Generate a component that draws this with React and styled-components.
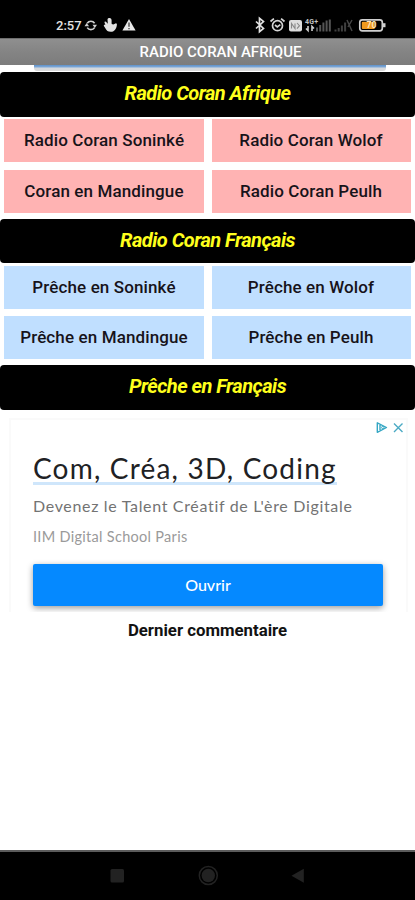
import React from 'react'
import styled, { createGlobalStyle } from 'styled-components'

const GlobalStyle = createGlobalStyle`
  * {
    box-sizing: border-box;
  }
  body {
    margin: 0;
    background-color: white;
    font-family: Roboto, "Liberation Sans", sans-serif;
  }
`

const Screen = styled.div`
    display: flex;
    flex-direction: column;
    width: 415px;
    height: 900px;
    overflow: hidden;
    background-color: white;
`

const StatusBar = styled.div`
    display: flex;
    justify-content: space-between;
    flex-shrink: 0;
    height: 38px;
    padding: 14px 29px 0 56px;
    background-color: black;
`

const StatusGroup = styled.div`
    display: flex;
    align-items: center;
    height: 22px;
`

const Clock = styled.span`
    width: 28px;
    font-size: 13px;
    font-weight: 500;
    color: #e4e4e4;
`

const TitleBar = styled.h1`
    flex-shrink: 0;
    height: 27px;
    margin: 0;
    padding-left: 26px;
    background: linear-gradient(#8f8f8f, #858585 45%, #7c7c7c);
    border-top: 1px solid #6e6e6e;
    color: white;
    font-size: 15px;
    font-weight: 500;
    line-height: 26px;
    text-align: center;
    white-space: nowrap;
`

const AdEdge = styled.div`
    flex-shrink: 0;
    height: 7px;
    padding: 0 29px 0 34px;
`

const AdEdgeLine = styled.div`
    height: 6px;
    background: linear-gradient(#5f91c8 0, #7fa9d8 2px, #d3d7dc 3px, #d9d9d9 6px);
    border-radius: 0 0 3px 3px;
`

const Heading = styled.h2`
    flex-shrink: 0;
    height: 44.5px;
    margin: 0;
    background-color: black;
    border-radius: 4px;
    color: #ffff1c;
    font-size: 20px;
    font-style: italic;
    font-weight: 700;
    letter-spacing: -0.52px;
    line-height: 43px;
    text-align: center;
    white-space: nowrap;
`

const Grid = styled.div`
    display: grid;
    flex-shrink: 0;
    grid-template-columns: 200px 199px;
    grid-auto-rows: 43px;
    gap: 7.5px;
    height: 102px;
    padding: 2.5px 4px 0;
`

const Station = styled.div`
    background-color: ${({ $color }) => $color};
    color: #17131a;
    font-size: 17px;
    font-weight: 500;
    letter-spacing: 0.12px;
    line-height: 43px;
    text-align: center;
    white-space: nowrap;
`

const Ad = styled.section`
    flex-shrink: 0;
    width: 399px;
    height: 194px;
    margin: 8px 0 0 9px;
    padding: 1px 1px 0 24px;
    overflow: hidden;
    border: 2px solid #fafafa;
    border-bottom: none;
    font-family: Lato, "Liberation Sans", sans-serif;
`

const AdChoices = styled.div`
    display: flex;
    justify-content: flex-end;
    align-items: center;
    height: 14px;
`

const AdTitle = styled.div`
    width: 304px;
    height: 50px;
    margin-left: -2px;
    padding-top: 17px;
    border-bottom: 3px solid #cfe6fb;
    color: #202124;
    font-size: 28px;
    letter-spacing: 1.2px;
    line-height: 33px;
    white-space: nowrap;
`

const AdText = styled.div`
    margin-left: -2px;
    padding-top: 10px;
    color: #737373;
    font-size: 16px;
    letter-spacing: 0.67px;
    line-height: 22px;
    white-space: nowrap;
`

const Advertiser = styled.div`
    margin-left: -2px;
    padding-top: 9px;
    color: #9a9a9a;
    font-size: 14.5px;
    letter-spacing: 0.3px;
    line-height: 22px;
    white-space: nowrap;
`

const OpenButton = styled.button`
    display: block;
    width: 350px;
    height: 42px;
    margin: 16px 0 0 -2px;
    padding: 0;
    border: none;
    border-radius: 2px;
    background-color: #0589ff;
    box-shadow: 0 2px 6px rgba(0, 0, 0, 0.4);
    color: white;
    font-family: inherit;
    font-size: 16px;
    font-weight: 500;
    text-align: center;
`

const LastComment = styled.h3`
    flex: 1;
    margin: 0;
    padding-top: 7.5px;
    color: #121212;
    font-size: 16.8px;
    font-weight: 700;
    line-height: 22px;
    text-align: center;
`

const NavBar = styled.nav`
    flex-shrink: 0;
    height: 50px;
    border-top: 2px solid #5c5c5c;
    background-color: black;
    text-align: center;
`

const sections = [
    {
        title: 'Radio Coran Afrique',
        color: '#ffb3b3',
        stations: ['Radio Coran Soninké', 'Radio Coran Wolof', 'Coran en Mandingue', 'Radio Coran Peulh'],
    },
    {
        title: 'Radio Coran Français',
        color: '#c0dfff',
        stations: ['Prêche en Soninké', 'Prêche en Wolof', 'Prêche en Mandingue', 'Prêche en Peulh'],
    },
]

const LeftIcons = () => (
    <svg width="54" height="22" viewBox="84 14 54 22" fill="none">
        <path d="M87.2 23.2a4.4 4.4 0 0 1 7.4 0M94.6 27.6a4.4 4.4 0 0 1-7.4 0" stroke="#d0d0d0" strokeWidth="1.6" />
        <path d="M84.5 26.3l2.2-3.4 2.4 3.4zM92.5 24.7l2.3 3.2 2.2-3.2z" fill="#d0d0d0" />
        <path d="M107.5 19.3c.3-1.2 2.6-1.8 3.6-.6.9 1.1.3 3.2.6 5.2l1.6.7 2.2-1.2c1.2-.4 1.7.8 1.3 2-.5 3.6-2.6 6.4-6.1 6.4-2.6 0-4.4-1.3-5.2-3.3l-1.6-2.6c-.4-1 .7-1.6 1.5-1l-.9-2.4c-.1-1 1.2-1.3 1.7-.4l1.6 1.7z" fill="#e3e3e3" />
        <path d="M129 19l6.6 11.5h-13.2z" fill="#e8e8e8" />
        <path d="M129 22.5v4.2M129 28v1.3" stroke="#333" strokeWidth="1.2" />
    </svg>
)

const RightIcons = () => (
    <svg width="134" height="22" viewBox="252 14 134 22" fill="none">
        <path d="M256 21.5l7.5 7-4 3.3V18.2l4 3.3-7.5 7" stroke="#e2e2e2" strokeWidth="1.7" />
        <circle cx="277.5" cy="25.7" r="5" stroke="#d5d5d5" strokeWidth="1.7" />
        <path d="M270.5 21.5l3.4-2.9M284.5 21.5l-3.4-2.9M275 25l2.3 2 3-2.3" stroke="#d5d5d5" strokeWidth="1.7" />
        <rect x="289" y="20" width="13" height="11.5" rx="2" fill="#dedede" />
        <path d="M291.5 28.5v-5l3.5 5v-5M297 23l2.5 2.7-2.5 3" stroke="#888" strokeWidth="1.1" />
        <text x="305" y="24.4" fill="#c2c2c2" fontFamily="Roboto, sans-serif" fontSize="7" fontWeight="700" textLength="13">4G+</text>
        <path d="M308 26v4.5l-2-2M312 31v-4.5l2 2" stroke="#d0d0d0" strokeWidth="1.6" />
        <path d="M317 31.5v-4M320.2 31.5V25M323.4 31.5v-9M326.6 31.5v-11M329.8 31.5V19.5" stroke="#555" strokeWidth="2" />
        <path d="M335.5 31.5v-2M338.7 31.5v-3.5M341.9 31.5v-6M345.1 31.5v-9" stroke="#3f3f3f" strokeWidth="2" />
        <path d="M347 20l5 11M352 20l-4 7" stroke="#454545" strokeWidth="1.5" />
        <rect x="359.8" y="19.8" width="22.5" height="11" rx="2.5" stroke="#d0d0d0" strokeWidth="1.7" />
        <path d="M384 23.2v4" stroke="#d0d0d0" strokeWidth="3" />
        <rect x="361.8" y="21.7" width="13" height="7.3" rx="1" fill="#f09a1e" />
        <text x="366.5" y="28.4" fill="#ffe6bc" fontFamily="Roboto, sans-serif" fontSize="8.5" fontWeight="700">70</text>
    </svg>
)

const AdChoicesIcons = () => (
    <svg width="29" height="14" viewBox="376 421 29 14" fill="none">
        <path d="M377.3 422.8v9.5l9.2-4.8zM380 425v5" stroke="#35a7c4" strokeWidth="1.4" strokeLinejoin="round" />
        <circle cx="382.8" cy="427.5" r="1.2" stroke="#35a7c4" />
        <path d="M394 423.5l8.5 8.5M402.5 423.5l-8.5 8.5" stroke="#4baac4" strokeWidth="1.4" />
    </svg>
)

const NavIcons = () => (
    <svg width="415" height="48" viewBox="0 852 415 48" fill="#222">
        <rect x="110.5" y="869" width="13.5" height="13.5" rx="1.5" />
        <circle cx="208.3" cy="875.5" r="6.7" />
        <circle cx="208.3" cy="875.5" r="9" fill="none" stroke="#222" strokeWidth="1.5" />
        <path d="M291.5 875.8l12.3-7v14z" />
    </svg>
)

const App = () => {
    return (
        <Screen>
            <GlobalStyle />
            <StatusBar>
                <StatusGroup>
                    <Clock>2:57</Clock>
                    <LeftIcons />
                </StatusGroup>
                <StatusGroup>
                    <RightIcons />
                </StatusGroup>
            </StatusBar>
            <TitleBar>RADIO CORAN AFRIQUE</TitleBar>
            <AdEdge>
                <AdEdgeLine />
            </AdEdge>
            {sections.map(section => (
                <React.Fragment key={section.title}>
                    <Heading>{section.title}</Heading>
                    <Grid>
                        {section.stations.map(name => (
                            <Station key={name} $color={section.color}>{name}</Station>
                        ))}
                    </Grid>
                </React.Fragment>
            ))}
            <Heading>Prêche en Français</Heading>
            <Ad>
                <AdChoices>
                    <AdChoicesIcons />
                </AdChoices>
                <AdTitle>Com, Créa, 3D, Coding</AdTitle>
                <AdText>Devenez le Talent Créatif de L'ère Digitale</AdText>
                <Advertiser>IIM Digital School Paris</Advertiser>
                <OpenButton>Ouvrir</OpenButton>
            </Ad>
            <LastComment>Dernier commentaire</LastComment>
            <NavBar>
                <NavIcons />
            </NavBar>
        </Screen>
    )
}

export default App
